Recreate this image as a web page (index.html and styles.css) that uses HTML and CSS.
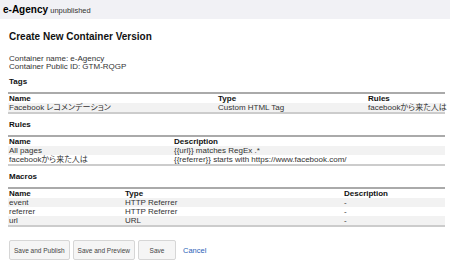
FILE: index.html
```html
<!DOCTYPE html>
<html lang="ja">
<head>
    <meta charset="UTF-8">
    <title>Create New Container Version</title>
    <link rel="stylesheet" href="styles.css">
</head>
<body>
    <div class="topbar">
        <span class="account">e-Agency</span> <span class="status">unpublished</span>
    </div>

    <div class="content">
        <h2>Create New Container Version</h2>

        <div class="info">
            Container name: e-Agency<br>
            Container Public ID: GTM-RQGP
        </div>

        <h4>Tags</h4>
        <table class="list">
            <tr>
                <th class="col-tag-name">Name</th>
                <th class="col-tag-type">Type</th>
                <th>Rules</th>
            </tr>
            <tr>
                <td>Facebook レコメンデーション</td>
                <td>Custom HTML Tag</td>
                <td>facebookから来た人は</td>
            </tr>
        </table>

        <h4>Rules</h4>
        <table class="list">
            <tr>
                <th class="col-rule-name">Name</th>
                <th>Description</th>
            </tr>
            <tr>
                <td>All pages</td>
                <td>{{url}} matches RegEx .*</td>
            </tr>
            <tr>
                <td>facebookから来た人は</td>
                <td>{{referrer}} starts with https://www.facebook.com/</td>
            </tr>
        </table>

        <h4>Macros</h4>
        <table class="list">
            <tr>
                <th class="col-macro-name">Name</th>
                <th class="col-macro-type">Type</th>
                <th>Description</th>
            </tr>
            <tr>
                <td>event</td>
                <td>HTTP Referrer</td>
                <td>-</td>
            </tr>
            <tr>
                <td>referrer</td>
                <td>HTTP Referrer</td>
                <td>-</td>
            </tr>
            <tr>
                <td>url</td>
                <td>URL</td>
                <td>-</td>
            </tr>
        </table>

        <div class="actions">
            <button>Save and Publish</button>
            <button>Save and Preview</button>
            <button class="btn-save">Save</button>
            <a href="#" class="cancel">Cancel</a>
        </div>
    </div>
</body>
</html>
```

FILE: styles.css
```css
body {
    margin: 0;
    font-family: "Liberation Sans", Arial, "Noto Sans CJK JP", sans-serif;
    font-size: 8px;
    font-feature-settings: "palt";
    color: #222;
    background: #fff;
}
.topbar {
    background: #f1f1f5;
    height: 19px;
    line-height: 19px;
    padding: 0 3px;
}
.account {
    font-weight: bold;
    font-size: 10px;
    color: #000;
}
.status {
    font-size: 7.5px;
    color: #333;
}
.content {
    padding: 0 8px;
}
h2 {
    font-size: 10px;
    margin: 11px 0 0 1px;
    line-height: 14px;
    color: #111;
}
.info {
    margin: 11px 0 0 1px;
    line-height: 8px;
    color: #333;
}
h4 {
    font-size: 8px;
    margin: 6px 0 0 1px;
    line-height: 10px;
    color: #111;
}
table.list {
    width: 437px;
    table-layout: fixed;
    border-collapse: collapse;
    margin-top: 5px;
    border-top: 2px solid #aaa;
    border-bottom: 2px solid #ccc;
}
.list th, .list td {
    text-align: left;
    padding: 0 1px;
    height: 9px;
    line-height: 9px;
    white-space: nowrap;
}
.list th {
    font-weight: bold;
    color: #111;
}
.list td {
    color: #333;
}
.list tr:nth-child(even) td {
    background: #f2f2f2;
}
.col-tag-name { width: 207px; }
.col-tag-type { width: 148px; }
.col-rule-name { width: 163px; }
.col-macro-name { width: 114px; }
.col-macro-type { width: 217px; }
.actions {
    margin-top: 13px;
    display: flex;
    align-items: center;
    gap: 3px;
    padding-left: 1px;
}
button {
    font-family: inherit;
    font-size: 6.5px;
    color: #444;
    background: #f5f5f5;
    border: 1px solid #d6d6d6;
    border-radius: 2px;
    height: 20px;
    padding: 0 4px;
    cursor: pointer;
}
.btn-save {
    width: 38px;
}
.cancel {
    color: #2b62b8;
    text-decoration: none;
    margin-left: 4px;
    font-size: 7.5px;
}
```
